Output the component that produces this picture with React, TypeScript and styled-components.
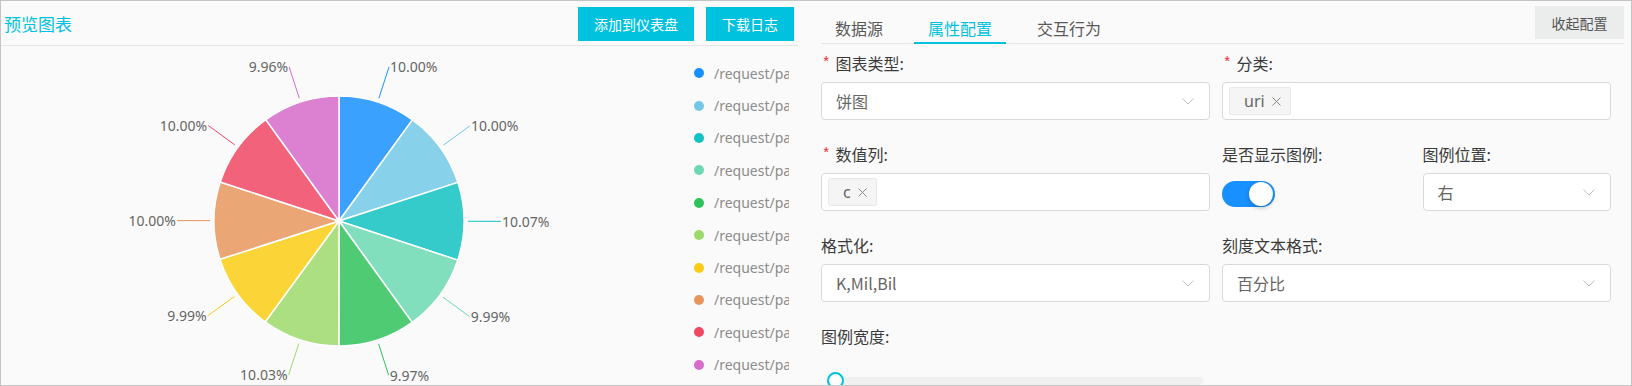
import React from "react";
import styled, { createGlobalStyle } from "styled-components";

const Global = createGlobalStyle`
  html, body { margin: 0; padding: 0; background: #fafafa; }
  body { font-family: "Noto Sans", "Noto Sans CJK SC", sans-serif; }
  * { box-sizing: border-box; }
`;

const FONT = `"Noto Sans", "Noto Sans CJK SC", sans-serif`;

const Frame = styled.div`
  width: 1632px;
  height: 386px;
  border: 1px solid #c4c4c4;
  background: #fafafa;
  overflow: hidden;
  display: flex;
  font-family: ${FONT};
`;

const LeftPanel = styled.section`
  width: 797px;
  flex: none;
  display: flex;
  flex-direction: column;
`;

const PanelHeader = styled.header`
  height: 45px;
  border-bottom: 1px solid #e6e6e6;
  display: flex;
  align-items: center;
  padding: 0 4px 0 3px;
  gap: 12px;
`;

const Title = styled.h2`
  margin: 0 auto 0 0;
  font-size: 17px;
  font-weight: 400;
  color: #00c1de;
  font-family: "Noto Sans CJK SC", sans-serif;
`;

const PrimaryButton = styled.button`
  height: 34px;
  padding: 0 16px;
  border: none;
  background: #00c1de;
  color: #fff;
  font-size: 14px;
  font-family: "Noto Sans CJK SC", sans-serif;
  margin-top: 2px;
  cursor: pointer;
`;

const ChartBody = styled.div`
  display: flex;
  flex: 1;
`;

const ChartSvg = styled.svg`
  width: 689px;
  height: 339px;
  flex: none;
  display: block;
`;

const Legend = styled.ul`
  list-style: none;
  margin: 0;
  padding: 11px 0 0 4px;
  width: 99px;
  overflow: hidden;
`;

const LegendItem = styled.li`
  height: 32.4px;
  display: flex;
  align-items: center;
  gap: 10px;
  white-space: nowrap;
  font-size: 14px;
  color: #8c8c8c;
`;

const Dot = styled.span<{ $c: string }>`
  width: 10px;
  height: 10px;
  border-radius: 50%;
  background: ${(p) => p.$c};
  flex: none;
`;

const RightPanel = styled.section`
  flex: 1;
  display: flex;
  flex-direction: column;
  padding-left: 23px;
`;

const TabBar = styled.div`
  height: 45px;
  margin-right: 7px;
  border-bottom: 1px solid #e6e6e6;
  display: flex;
  align-items: stretch;
  gap: 17px;
`;

const Tab = styled.div<{ $active?: boolean }>`
  padding: 12px 14px 0;
  display: flex;
  align-items: center;
  font-size: 16px;
  font-family: "Noto Sans CJK SC", sans-serif;
  color: ${(p) => (p.$active ? "#00c1de" : "#595959")};
  border-bottom: 2px solid ${(p) => (p.$active ? "#00c1de" : "transparent")};
  margin-bottom: -1px;
`;

const CollapseButton = styled.button`
  margin-left: auto;
  align-self: flex-start;
  margin-top: 5px;
  height: 33px;
  width: 89px;
  border: none;
  background: #ebecec;
  color: #555;
  font-size: 14px;
  font-family: "Noto Sans CJK SC", sans-serif;
`;

const Form = styled.div`
  display: grid;
  grid-template-columns: repeat(4, 1fr);
  column-gap: 12px;
  row-gap: 22px;
  padding: 7px 20px 0 0;
`;

const FormItem = styled.div<{ $span: number }>`
  grid-column: span ${(p) => p.$span};
  display: flex;
  flex-direction: column;
  gap: 7px;
`;

const Label = styled.label`
  height: 24px;
  display: flex;
  align-items: center;
  font-size: 16px;
  color: #3a3a3a;
  font-family: "Noto Sans CJK SC", sans-serif;
`;

const Star = styled.span`
  color: #f5222d;
  font-size: 14px;
  margin: 0 5px 0 1px;
  font-family: "Liberation Mono", monospace;
`;

const Box = styled.div`
  height: 38px;
  background: #fff;
  border: 1px solid #d9d9d9;
  border-radius: 4px;
  display: flex;
  align-items: center;
  padding: 0 15px 0 14px;
  font-size: 16px;
  color: #666;
  font-family: "Noto Sans CJK SC", sans-serif;
`;

const SelectText = styled.span`
  flex: 1;
`;

const TagBox = styled(Box)`
  padding: 0 6px;
`;

const Tag = styled.span`
  height: 28px;
  display: inline-flex;
  align-items: center;
  gap: 7px;
  padding: 0 9px 0 14px;
  background: #f5f5f5;
  border: 1px solid #e8e8e8;
  border-radius: 2px;
  font-size: 16px;
  color: #666;
  font-family: ${FONT};
`;

const SwitchTrack = styled.div`
  margin-top: 8px;
  width: 53px;
  height: 26px;
  border-radius: 13px;
  background: #1890ff;
  position: relative;
`;

const SwitchKnob = styled.span`
  position: absolute;
  right: 2px;
  top: 1px;
  width: 24px;
  height: 24px;
  border-radius: 50%;
  background: #fff;
  box-shadow: 0 2px 4px rgba(0, 35, 11, 0.25);
`;

const SliderWrap = styled.div`
  margin: 22px 7px 0 6px;
  height: 8px;
  background: #f0f0f0;
  border-radius: 4px;
  position: relative;
`;

const SliderHandle = styled.span`
  position: absolute;
  left: 0;
  top: -5px;
  width: 17px;
  height: 17px;
  border-radius: 50%;
  border: 2px solid #00c1de;
  background: #fff;
`;

const Chevron = () => (
  <svg width="12" height="7" viewBox="0 0 12 7">
    <polyline points="0.5,0.5 6,6 11.5,0.5" fill="none" stroke="#bfbfbf" strokeWidth="1" />
  </svg>
);

const Close = () => (
  <svg width="9" height="9" viewBox="0 0 9 9">
    <path d="M0.5 0.5 L8.5 8.5 M8.5 0.5 L0.5 8.5" stroke="#888" strokeWidth="1" />
  </svg>
);

const slices = [
  { c: "#1890FF", v: 10.0 },
  { c: "#73C9E6", v: 10.0 },
  { c: "#13C2C2", v: 10.07 },
  { c: "#6CD9B3", v: 9.99 },
  { c: "#2FC25B", v: 9.97 },
  { c: "#9DD96C", v: 10.03 },
  { c: "#FACC14", v: 9.99 },
  { c: "#E6965C", v: 10.0 },
  { c: "#F04864", v: 10.0 },
  { c: "#D66BCA", v: 9.96 },
];

const CX = 338;
const CY = 175;
const R = 125;

const pt = (deg: number, r: number) => {
  const a = (deg * Math.PI) / 180;
  return [CX + r * Math.sin(a), CY - r * Math.cos(a)];
};

const Pie = () => {
  const total = slices.reduce((s, d) => s + d.v, 0);
  let acc = 0;
  return (
    <ChartSvg viewBox="0 0 689 339">
      {slices.map((d, i) => {
        const a0 = (acc / total) * 360;
        acc += d.v;
        const a1 = (acc / total) * 360;
        const [x0, y0] = pt(a0, R);
        const [x1, y1] = pt(a1, R);
        const mid = (a0 + a1) / 2;
        const [lx0, ly0] = pt(mid, R + 4);
        const [lx1, ly1] = pt(mid, R + 37);
        const right = Math.sin((mid * Math.PI) / 180) >= 0;
        return (
          <g key={i}>
            <path
              d={`M${CX} ${CY} L${x0} ${y0} A${R} ${R} 0 0 1 ${x1} ${y1} Z`}
              fill={d.c}
              fillOpacity={0.85}
              stroke="#fff"
              strokeWidth={1.5}
            />
            <line x1={lx0} y1={ly0} x2={lx1} y2={ly1} stroke={d.c} strokeWidth={1} />
            <text
              x={right ? lx1 + 1 : lx1 - 1}
              y={ly1}
              textAnchor={right ? "start" : "end"}
              dominantBaseline="central"
              fontSize="14"
              fill="#666"
              fontFamily={FONT}
            >
              {d.v.toFixed(2)}%
            </text>
          </g>
        );
      })}
    </ChartSvg>
  );
};

export default function App() {
  return (
    <>
      <Global />
      <Frame>
        <LeftPanel>
          <PanelHeader>
            <Title>预览图表</Title>
            <PrimaryButton>添加到仪表盘</PrimaryButton>
            <PrimaryButton>下载日志</PrimaryButton>
          </PanelHeader>
          <ChartBody>
            <Pie />
            <Legend>
              {slices.map((d, i) => (
                <LegendItem key={i}>
                  <Dot $c={d.c} />
                  /request/path/{i + 1}
                </LegendItem>
              ))}
            </Legend>
          </ChartBody>
        </LeftPanel>
        <RightPanel>
          <TabBar>
            <Tab>数据源</Tab>
            <Tab $active>属性配置</Tab>
            <Tab>交互行为</Tab>
            <CollapseButton>收起配置</CollapseButton>
          </TabBar>
          <Form>
            <FormItem $span={2}>
              <Label>
                <Star>*</Star>图表类型:
              </Label>
              <Box>
                <SelectText>饼图</SelectText>
                <Chevron />
              </Box>
            </FormItem>
            <FormItem $span={2}>
              <Label>
                <Star>*</Star>分类:
              </Label>
              <TagBox>
                <Tag>
                  uri <Close />
                </Tag>
              </TagBox>
            </FormItem>
            <FormItem $span={2}>
              <Label>
                <Star>*</Star>数值列:
              </Label>
              <TagBox>
                <Tag>
                  c <Close />
                </Tag>
              </TagBox>
            </FormItem>
            <FormItem $span={1}>
              <Label>是否显示图例:</Label>
              <SwitchTrack>
                <SwitchKnob />
              </SwitchTrack>
            </FormItem>
            <FormItem $span={1}>
              <Label>图例位置:</Label>
              <Box>
                <SelectText>右</SelectText>
                <Chevron />
              </Box>
            </FormItem>
            <FormItem $span={2}>
              <Label>格式化:</Label>
              <Box>
                <SelectText>K,Mil,Bil</SelectText>
                <Chevron />
              </Box>
            </FormItem>
            <FormItem $span={2}>
              <Label>刻度文本格式:</Label>
              <Box>
                <SelectText>百分比</SelectText>
                <Chevron />
              </Box>
            </FormItem>
            <FormItem $span={2}>
              <Label>图例宽度:</Label>
              <SliderWrap>
                <SliderHandle />
              </SliderWrap>
            </FormItem>
          </Form>
        </RightPanel>
      </Frame>
    </>
  );
}
